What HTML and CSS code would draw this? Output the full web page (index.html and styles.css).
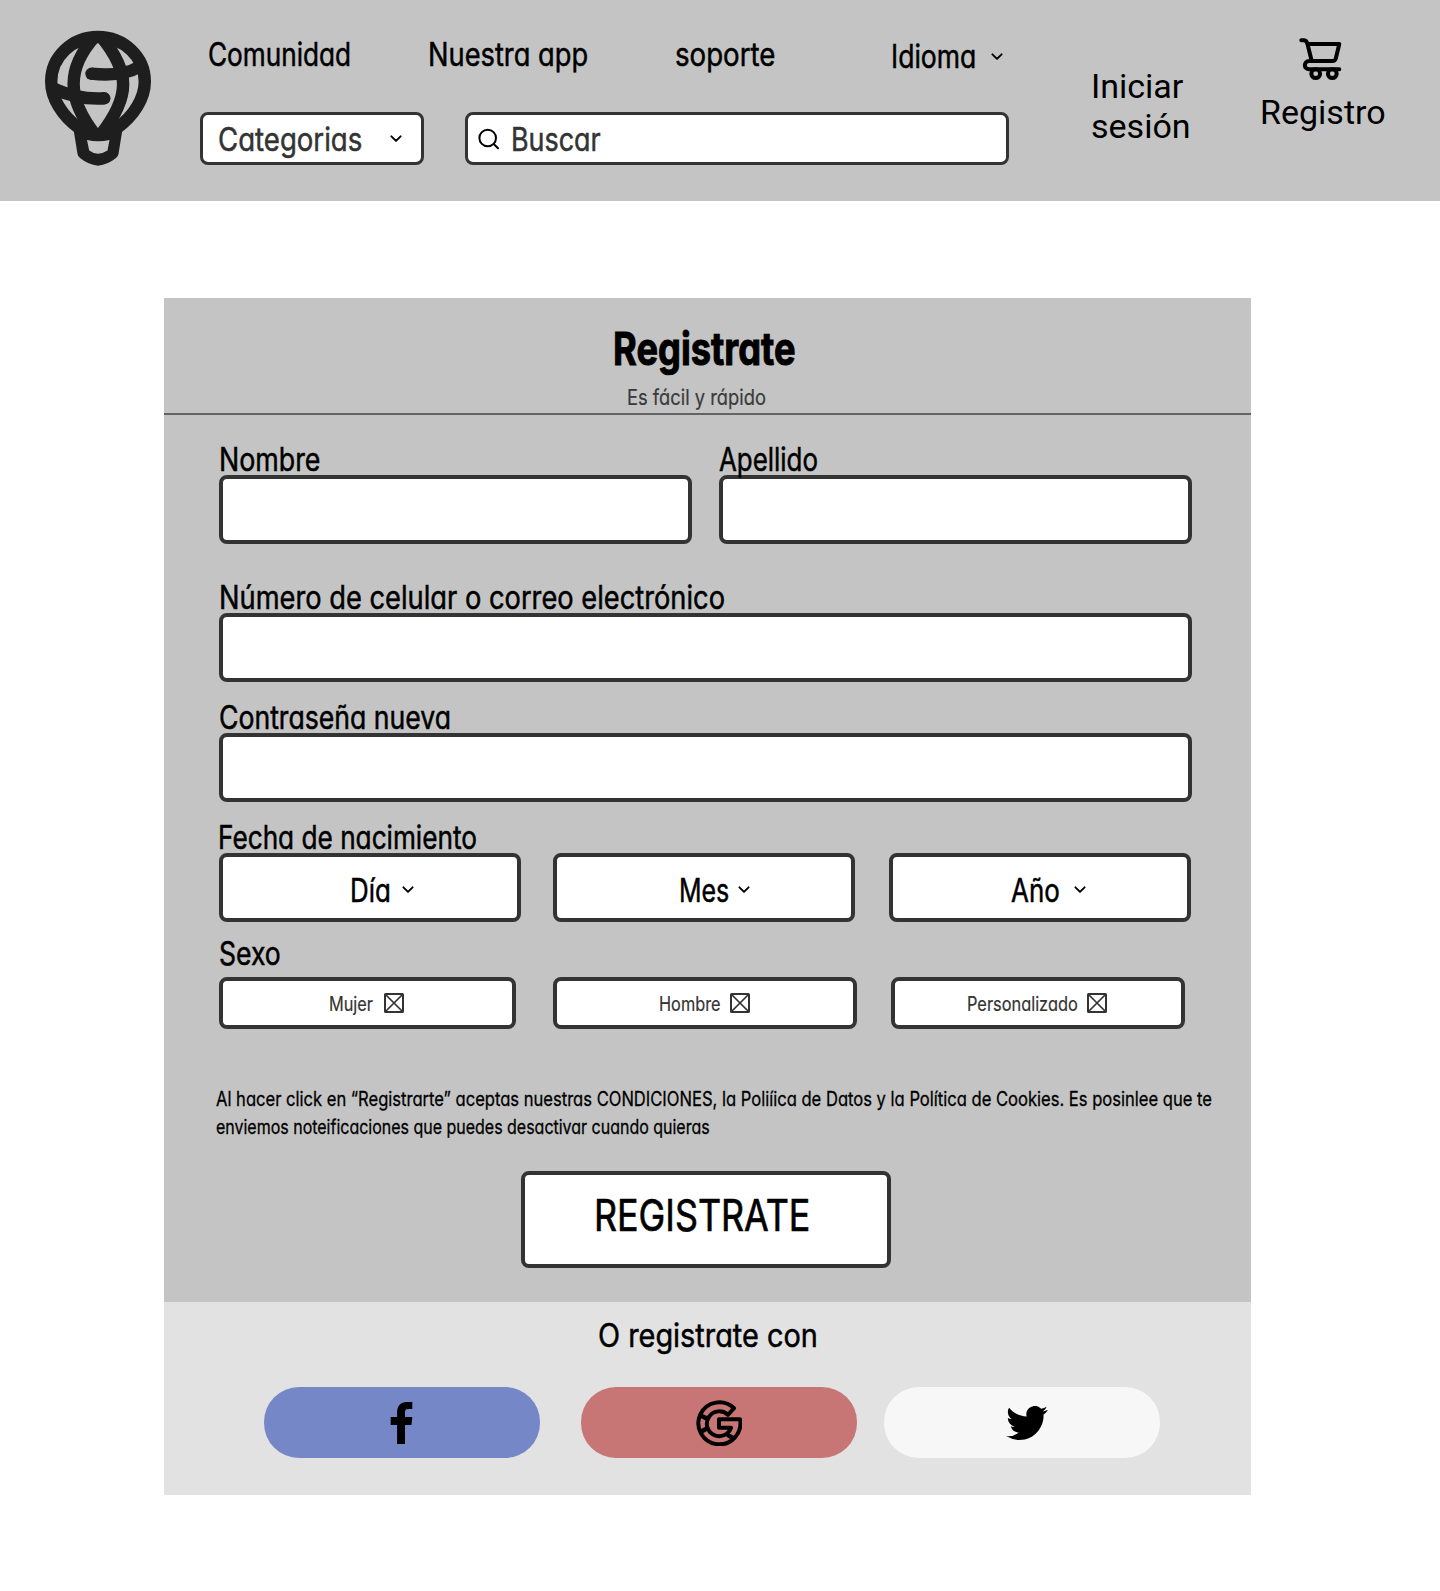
FILE: index.html
```html
<!DOCTYPE html>
<html lang="es">
<head>
<meta charset="utf-8">
<title>Registrate</title>
<link rel="stylesheet" href="styles.css">
</head>
<body>
<svg class="defs" width="0" height="0" aria-hidden="true">
  <symbol id="chevron" viewBox="0 0 12 8"><path d="M1.4 1.3 6 5.9 10.6 1.3" fill="none" stroke="#000" stroke-width="1.9" stroke-linecap="round" stroke-linejoin="round"/></symbol>
  <symbol id="crossbox" viewBox="0 0 20 20"><rect x="1" y="1" width="18" height="18" rx=".6" fill="none" stroke="#333" stroke-width="2"/><path d="M1.5 1.5 18.5 18.5M18.5 1.5 1.5 18.5" stroke="#333" stroke-width="1.7"/></symbol>
</svg>

<header class="topbar">
  <svg class="logo" viewBox="0 0 108 138" role="img" aria-label="Logo">
    <g fill="none" stroke="#1e1e1e" stroke-width="12.4">
      <path d="M35 98C18 86 7.2 68 7.2 51.5A46.8 44.500 0 0 1 100.800 51.500C100.800 68 90 86 73 98"/>
      <path d="M50.500 7C23 38 22 68 51.500 105"/>
      <path d="M57.500 7C86 42 87 66 56.500 105"/>
      <path d="M47.300 43.700Q78 47 95 37"/>
      <path d="M60.300 68.300Q35 70 9 58.500"/>
    </g>
    <circle cx="47.500" cy="43.800" r="6.200" fill="#1e1e1e"/><circle cx="60.300" cy="68.300" r="6.200" fill="#1e1e1e"/>
    <path fill="#1e1e1e" fill-rule="evenodd" d="M29 96 45 93 54 99.500 63 93 79 96 74.500 124Q74 126.500 72 128Q64 134.500 54 135.800Q44 134.500 36 128Q34 126.500 33.500 124ZM43 110Q54 112.500 65.500 110L63.500 120.500Q59 123.500 54 123.700Q49 123.500 45.200 120.500Z"/>
  </svg>

  <div class="browse">
    <nav class="links">
      <a class="hand w-comunidad">Comunidad</a>
      <a class="hand w-app">Nuestra app</a>
      <a class="hand w-soporte">soporte</a>
      <a class="language"><span class="hand w-idioma">Idioma</span><svg class="chev"><use href="#chevron"/></svg></a>
    </nav>
    <div class="tools">
      <button class="box categories"><span class="hand w-categorias">Categorias</span><svg class="chev"><use href="#chevron"/></svg></button>
      <div class="box search">
        <svg class="lens" viewBox="0 0 22 22"><circle cx="9.700" cy="10" r="8.300" fill="none" stroke="#000" stroke-width="2"/><path d="M15.700 16 20 20.200" stroke="#000" stroke-width="2" stroke-linecap="round"/></svg>
        <span class="hand w-buscar">Buscar</span>
      </div>
    </div>
  </div>

  <a class="login">Iniciar sesión</a>
  <a class="signup">
    <svg class="cart" viewBox="0 0 44 44" fill="none" stroke="#000" stroke-width="4" stroke-linecap="round" stroke-linejoin="round">
      <path d="M3.300 3.300h2.200c2.300 0 3.400 1.200 4 3.700l4.200 17M9.500 7H41.300L37.800 21.500Q37 24 34.500 24H11.200c-5.800 0-5.800 8.300 0 8.300H41.300"/>
      <circle cx="17.700" cy="36.700" r="4.400"/><circle cx="34.300" cy="36.700" r="4.400"/>
    </svg>
    <span>Registro</span>
  </a>
</header>

<main class="card">
  <div class="card-head">
    <h1 class="hand">Registrate</h1>
    <p class="hand tagline">Es fácil y rápido</p>
  </div>

  <form class="form">
    <div class="pair">
      <label class="field"><span class="hand w-nombre">Nombre</span><input class="box"></label>
      <label class="field"><span class="hand w-apellido">Apellido</span><input class="box"></label>
    </div>
    <label class="field"><span class="hand w-numero">Número de celular o correo electrónico</span><input class="box"></label>
    <label class="field"><span class="hand w-clave">Contraseña nueva</span><input class="box"></label>

    <div class="field">
      <span class="hand w-fecha">Fecha de nacimiento</span>
      <div class="dates">
        <button type="button" class="box date day"><span class="hand w-dia">Día</span><svg class="chev"><use href="#chevron"/></svg></button>
        <button type="button" class="box date month"><span class="hand w-mes">Mes</span><svg class="chev"><use href="#chevron"/></svg></button>
        <button type="button" class="box date year"><span class="hand w-ano">Año</span><svg class="chev"><use href="#chevron"/></svg></button>
      </div>
    </div>

    <div class="field gender">
      <span class="hand w-sexo">Sexo</span>
      <div class="options">
        <button type="button" class="box option female"><span class="hand">Mujer</span><svg class="check"><use href="#crossbox"/></svg></button>
        <button type="button" class="box option male"><span class="hand">Hombre</span><svg class="check"><use href="#crossbox"/></svg></button>
        <button type="button" class="box option custom"><span class="hand">Personalizado</span><svg class="check"><use href="#crossbox"/></svg></button>
      </div>
    </div>

    <p class="terms">
      <span class="hand w-terms-1">Al hacer click en “Registrarte” aceptas nuestras CONDICIONES, la Poliíica de Datos y la Política de Cookies. Es posinlee que te</span>
      <span class="hand w-terms-2">enviemos noteificaciones que puedes desactivar cuando quieras</span>
    </p>

    <button type="button" class="box submit"><span class="hand">REGISTRATE</span></button>
  </form>

  <section class="social">
    <h2 class="hand">O registrate con</h2>
    <div class="providers">
      <a class="pill facebook" aria-label="Facebook"><svg viewBox="0 0 23 42"><path d="M7.100 42V23H.700V15h6.400V10.500C7.100 3.500 11 0 16.500 0H22.300V7H18c-2.200 0-3 1-3 3v5h7.300L21.500 23H15V42Z"/></svg></a>
      <a class="pill google" aria-label="Google"><svg viewBox="0 0 46 46" fill="none" stroke="#000" stroke-width="4" stroke-linejoin="round"><path d="M38 8.200A21 21 0 1 0 44 19.200H23V27.800H35A12.400 12.400 0 1 1 31.900 14.800Z"/><path stroke-width="4.500" d="M4 15.200 11.200 18.600M4.700 32 11.500 28M31.500 34.800 37.600 38.500"/></svg></a>
      <a class="pill twitter" aria-label="Twitter"><svg viewBox="0 2.200 24 19.600"><path d="M23.953 4.570a10 10 0 01-2.825.775 4.958 4.958 0 002.163-2.723c-.951.555-2.005.959-3.127 1.184a4.920 4.920 0 00-8.384 4.482C7.690 8.095 4.067 6.130 1.640 3.162a4.822 4.822 0 00-.666 2.475c0 1.710.870 3.213 2.188 4.096a4.904 4.904 0 01-2.228-.616v.060a4.923 4.923 0 003.946 4.827 4.996 4.996 0 01-2.212.085 4.936 4.936 0 004.604 3.417 9.867 9.867 0 01-6.102 2.105c-.390 0-.779-.023-1.170-.067a13.995 13.995 0 007.557 2.209c9.053 0 13.998-7.496 13.998-13.985 0-.210 0-.420-.015-.630A9.935 9.935 0 0024 4.590z"/></svg></a>
    </div>
  </section>
</main>
</body>
</html>
```
FILE: styles.css
```css
* { box-sizing: border-box; }
body { margin: 0; background: #fff; color: #000; font-family: Inter, sans-serif; }
h1, h2, p { margin: 0; font-weight: 400; }
button, input { font: inherit; color: inherit; padding: 0; margin: 0; }
svg { display: block; flex: none; }
.defs { position: absolute; }

/* Narrow handwriting-like lettering: single-storey "a", condensed by --narrow */
.hand {
  --narrow: .83;
  display: block;
  flex: none;
  font-size: 32px;
  line-height: 40px;
  font-feature-settings: "cv11";
  white-space: nowrap;
  text-align: left;
  -webkit-text-stroke: .5px currentColor;
  transform: scaleX(var(--narrow));
  transform-origin: 0 0;
}
.w-comunidad { --narrow: .818; }
.w-app { --narrow: .852; }
.w-soporte { --narrow: .864; }
.w-idioma { --narrow: .83; }
.w-categorias { --narrow: .862; }
.w-buscar { --narrow: .841; }
.w-nombre { --narrow: .838; }
.w-apellido { --narrow: .809; }
.w-numero { --narrow: .852; }
.w-clave { --narrow: .832; }
.w-fecha { --narrow: .818; }

.box { background: #fff; border: 4px solid #333; border-radius: 8px; }
.chev { width: 12px; height: 8px; }

/* Top bar */
.topbar { display: flex; align-items: flex-start; height: 201px; background: #c4c4c4; }
.logo { width: 108px; height: 138px; margin: 30px 48px 0 44px; }
.browse { width: 809px; padding-top: 35px; }
.links { display: grid; grid-template-columns: 220px 247px 216px 1fr; padding-left: 8px; }
.language { display: flex; align-items: center; padding-top: 2px; margin-bottom: -2px; }
.w-idioma { width: 100px; }
.tools { display: flex; gap: 41px; margin-top: 37px; color: #333; }
.tools .box { display: flex; align-items: center; height: 53px; border-width: 3px; }
.tools .hand { padding-top: 3px; }
.categories { width: 224px; justify-content: space-between; padding: 0 19px 0 15px; }
.search { width: 544px; gap: 11px; padding-left: 10px; }
.lens { width: 22px; height: 22px; }
.login, .signup { font-family: Roboto, sans-serif; font-size: 34px; line-height: 40px; }
.login { width: 110px; margin: 66px 0 0 82px; }
.signup { margin: 37px 0 0 59px; }
.cart { width: 44px; height: 44px; margin: 0 0 11px 38px; }

/* Registration card */
.card { width: 1087px; margin: 97px 0 0 164px; }
.card-head { height: 117px; padding-top: 24px; background: #c4c4c4; border-bottom: 2px solid #636363; }
.card-head h1 { --narrow: .806; width: max-content; margin-left: 449px; font-size: 45px; line-height: 54px; font-weight: 700; -webkit-text-stroke-width: 1px; }
.tagline { --narrow: .833; width: max-content; margin: 7px 0 0 463px; font-size: 22px; line-height: 28px; color: #3a3a3a; -webkit-text-stroke-width: .2px; }

.form { height: 887px; padding: 25px 59px 0 55px; background: #c4c4c4; }
.pair { display: grid; grid-template-columns: 473px 473px; gap: 27px; margin-bottom: 34px; }
.field { display: block; margin-bottom: 16px; }
.pair .field { margin-bottom: 0; }
.field > .hand { width: max-content; height: 35px; }
.field > input { display: block; width: 100%; height: 69px; }
.field > .w-fecha { margin-left: -1px; }

.dates, .options { display: flex; }
.date { display: flex; align-items: center; width: 302px; height: 69px; padding-top: 7px; }
.date .chev { margin-top: -3px; }
.day { padding-left: 127px; }
.month { margin-left: 32px; padding-left: 122px; }
.year { margin-left: 34px; padding-left: 118px; }
.w-dia { --narrow: .81; width: 52px; }
.w-mes { --narrow: .78; width: 59px; }
.w-ano { --narrow: .81; width: 63px; }

.gender { margin: -4px 0 0; }
.gender > .w-sexo { height: 43px; }
.option { display: flex; align-items: center; height: 52px; color: #333; }
.option .hand { font-size: 20px; line-height: 28px; --narrow: .815; padding-top: 1px; -webkit-text-stroke-width: .2px; }
.check { width: 20px; height: 20px; }
.female { width: 297px; padding-left: 106px; }
.male { width: 304px; margin-left: 37px; padding-left: 102px; }
.custom { width: 294px; margin-left: 34px; padding-left: 72px; }
.female .hand { width: 55px; }
.male .hand { width: 71px; }
.custom .hand { width: 120px; --narrow: .818; }

.terms { margin: 56px 0 30px -3px; }
.terms .hand { width: 990px; font-size: 20px; line-height: 28px; -webkit-text-stroke-width: .3px; }
.terms .w-terms-1 { --narrow: .828; }
.terms .w-terms-2 { --narrow: .799; }

.submit { display: block; width: 370px; height: 97px; margin-left: 302px; padding: 0 0 9px 69px; }
.submit .hand { font-size: 44px; line-height: 52px; --narrow: .814; -webkit-text-stroke-width: .7px; }

/* Social sign-up */
.social { height: 193px; padding-top: 14px; background: #e2e2e2; }
.social h2 { --narrow: .902; width: max-content; margin-left: 434px; }
.providers { display: flex; margin: 31px 0 0 100px; }
.pill { display: flex; align-items: center; justify-content: center; width: 276px; height: 71px; border-radius: 35px; }
.facebook { background: #7687c7; }
.facebook svg { width: 23px; height: 42px; margin-right: 2px; }
.google { margin-left: 41px; background: #c77575; }
.google svg { width: 46px; height: 46px; }
.twitter { margin-left: 27px; background: #f7f7f7; }
.twitter svg { width: 42px; height: 34px; margin-left: 10px; }
```
